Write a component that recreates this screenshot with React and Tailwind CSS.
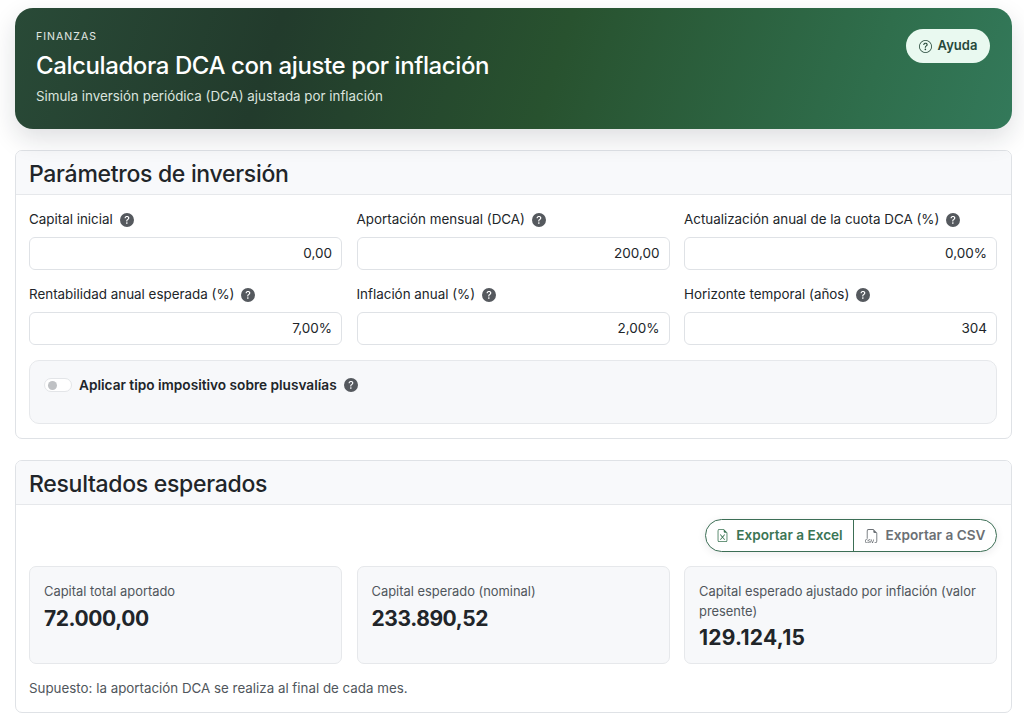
import { BsQuestionCircle, BsQuestionCircleFill, BsFileEarmarkExcel, BsFiletypeCsv } from "react-icons/bs";

const FIELDS = [
  { label: "Capital inicial", value: "0,00" },
  { label: "Aportación mensual (DCA)", value: "200,00" },
  { label: "Actualización anual de la cuota DCA (%)", value: "0,00%" },
  { label: "Rentabilidad anual esperada (%)", value: "7,00%" },
  { label: "Inflación anual (%)", value: "2,00%" },
  { label: "Horizonte temporal (años)", value: "304" },
];

const RESULTS = [
  { label: "Capital total aportado", value: "72.000,00", tracking: "tracking-[-0.02em]" },
  { label: "Capital esperado (nominal)", value: "233.890,52", tracking: "tracking-[-0.02em]" },
  { label: "Capital esperado ajustado por inflación (valor presente)", value: "129.124,15", tracking: "tracking-[0.013em]" },
];

function Card({ title, children }) {
  return (
    <section className="bg-white border border-[#dfe2e6] rounded-[7px] overflow-hidden">
      <div className="h-[44px] pt-[3px] pl-[13px] pr-[14px] flex items-center bg-[#f8f9fb] border-b border-[#e6e8eb]">
        <h2 className="text-[23px] tracking-[-0.013em] font-medium text-[#212529] leading-none">{title}</h2>
      </div>
      {children}
    </section>
  );
}

function Field({ label, value }) {
  return (
    <div>
      <div className="flex items-center gap-[7px] h-[21px] mb-[7px] text-[13.4px] text-[#212529]">
        <span>{label}</span>
        <BsQuestionCircleFill className="text-[14px] text-[#55595e]" />
      </div>
      <div className="h-[33px] px-[9px] flex items-center justify-end bg-white border border-[#dfe2e6] rounded-[6px] text-[13.5px] text-[#212529]">
        {value}
      </div>
    </div>
  );
}

function ResultCard({ label, value, tracking }) {
  return (
    <div className="h-[98px] px-[14px] pt-[15px] bg-[#f7f8fa] border border-[#e6e8eb] rounded-[7px]">
      <div className="text-[12.9px] leading-[19.5px] text-[#50565c]">{label}</div>
      <div className={`mt-[2px] text-[21px] leading-[30px] font-bold text-[#212529] ${tracking}`}>{value}</div>
    </div>
  );
}

export default function App() {
  return (
    <div className="min-h-[725px] bg-white pt-[8px] pl-[15px] pr-[12px] font-['Inter',sans-serif]">
      <header className="relative h-[121px] px-[21px] pt-[22px] rounded-[18px] bg-[linear-gradient(108deg,#294a37_0%,#223b2c_26%,#28522f_54%,#2f6e4c_85%,#33795a_100%)] shadow-[0_10px_26px_rgba(20,30,40,0.14)]">
        <div className="text-[10.5px] leading-[14px] tracking-[0.1em] text-[#e3e9e5]">FINANZAS</div>
        <h1 className="mt-[6px] text-[24px] tracking-[-0.017em] leading-[32px] font-medium text-white">
          Calculadora DCA con ajuste por inflación
        </h1>
        <p className="mt-[4px] text-[13.35px] leading-[20px] text-[#dbe4de]">
          Simula inversión periódica (DCA) ajustada por inflación
        </p>
        <button className="absolute right-[22px] top-[21px] h-[34px] w-[84px] flex items-center justify-center gap-[6px] rounded-full bg-[#e9f9f0] text-[13px] font-semibold text-[#26483a]">
          <BsQuestionCircle className="text-[13px]" />
          Ayuda
        </button>
      </header>

      <div className="mt-[21px] flex flex-col gap-[21px]">
        <Card title="Parámetros de inversión">
          <div className="pl-[13px] pr-[14px] py-[14px]">
            <div className="grid grid-cols-3 gap-x-[14.5px] gap-y-[14px]">
              {FIELDS.map((f) => (
                <Field key={f.label} label={f.label} value={f.value} />
              ))}
            </div>
            <div className="mt-[15px] h-[64px] px-[14px] pt-[14px] flex items-start gap-[7px] bg-[#f7f8fa] border border-[#e6e8eb] rounded-[10px]">
              <div className="mt-[3px] w-[28px] h-[14px] px-[3px] flex items-center bg-white border border-[#e3e5e8] rounded-full">
                <div className="w-[9px] h-[9px] rounded-full bg-[#bfc1c4]" />
              </div>
              <div className="flex items-center gap-[7px] text-[13.65px] leading-[20px] font-semibold text-[#212529]">
                <span>Aplicar tipo impositivo sobre plusvalías</span>
                <BsQuestionCircleFill className="text-[14px] text-[#55595e]" />
              </div>
            </div>
          </div>
        </Card>

        <Card title="Resultados esperados">
          <div className="pl-[13px] pr-[14px] py-[14px]">
            <div className="flex justify-end">
              <div className="h-[33px] flex rounded-full border border-[#3c6e55] bg-white text-[13.6px] font-semibold shadow-[0_2px_8px_rgba(20,30,40,0.08)]">
                <button className="w-[148px] flex items-center justify-center gap-[7px] text-[#3b7554] border-r border-[#3c6e55]">
                  <BsFileEarmarkExcel className="text-[13px]" />
                  Exportar a Excel
                </button>
                <button className="w-[142px] flex items-center justify-center gap-[7px] text-[#6b7075]">
                  <BsFiletypeCsv className="text-[14px]" />
                  Exportar a CSV
                </button>
              </div>
            </div>
            <div className="mt-[14px] grid grid-cols-3 gap-x-[14.5px]">
              {RESULTS.map((r) => (
                <ResultCard key={r.label} label={r.label} value={r.value} tracking={r.tracking} />
              ))}
            </div>
            <p className="mt-[14px] text-[13.35px] leading-[20px] text-[#50565c]">
              Supuesto: la aportación DCA se realiza al final de cada mes.
            </p>
          </div>
        </Card>
      </div>
    </div>
  );
}
